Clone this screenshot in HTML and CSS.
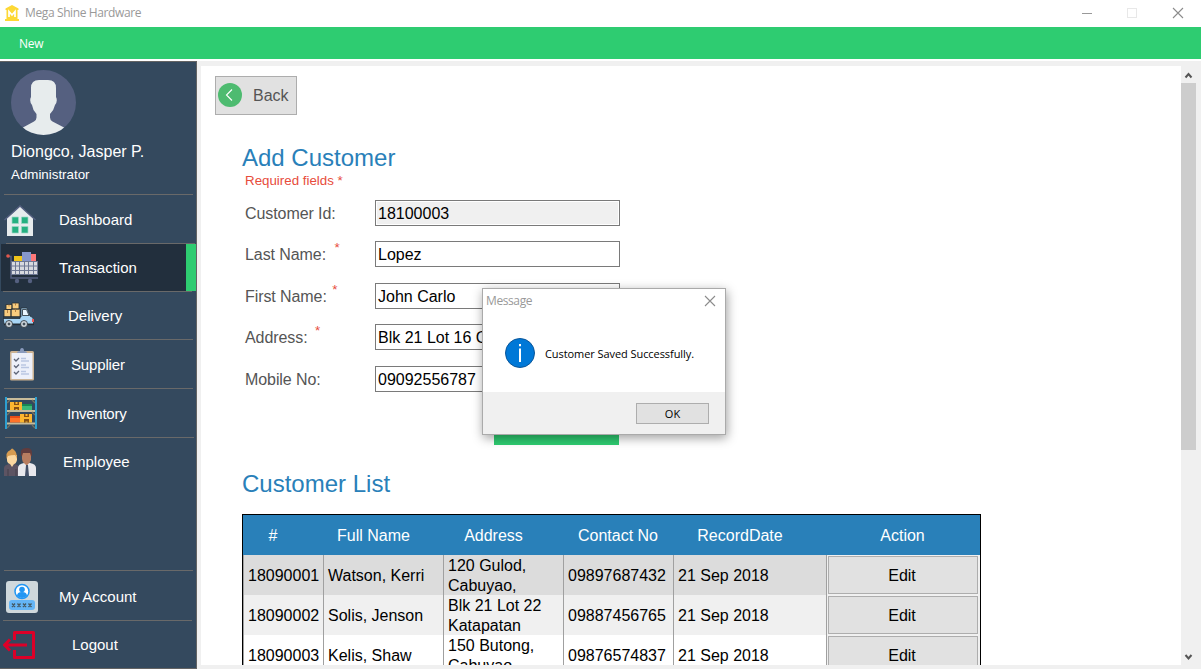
FILE: index.html
```html
<!DOCTYPE html>
<html lang="en">
<head>
<meta charset="utf-8">
<title>Mega Shine Hardware</title>
<link rel="stylesheet" href="styles.css">
</head>
<body>
<div class="window">
  <header class="titlebar">
    <svg class="app-logo" width="14" height="16" viewBox="0 0 14 16"><path fill="#fdd835" d="M7 0 13.500 3.400V5H.5V3.400zM1.500 5h11v9h-11zM0 14h14v2H0z"/><path d="M4 12V6.500L7 10l3-3.500V12" fill="none" stroke="#fff" stroke-width="1.700"/></svg>
    <span class="app-name">Mega Shine Hardware</span>
    <svg class="controls" width="104" height="12" viewBox="0 0 104 12" fill="none"><path d="M0 6.500h10" stroke="#999"/><rect x="45.500" y="1.500" width="9" height="9" stroke="#e8e8e8"/><path d="M91 1l10 10M101 1 91 11" stroke="#8c8c8c" stroke-width="1.100"/></svg>
  </header>
  <nav class="menubar"><span class="menu-new">New</span></nav>
  <div class="body">
    <aside class="sidebar">
      <div class="profile">
        <svg class="avatar" width="66" height="66" viewBox="0 0 66 66"><defs><clipPath id="face"><circle cx="32.500" cy="32.500" r="32.500"/></clipPath></defs><circle cx="32.500" cy="32.500" r="32.500" fill="#556080"/><path clip-path="url(#face)" fill="#e7eced" d="M11 58 23 51.500q2.500-1.500 2.500-4V44q-4-4.500-4.500-9-3-4-1-8v-9q0-8 8-8h9q8 0 8 8v9q2 4-1 8-1 5-5 9v3.500q0 2.500 2.500 4L54 58v8H11z"/></svg>
        <div class="user-name">Diongco, Jasper P.</div>
        <div class="user-role">Administrator</div>
      </div>
      <div class="rule rule-a"></div>
      <div class="item h48"><div class="ico ico-house"><svg width="34" height="32" viewBox="0 0 34 32"><path d="M3 13 16 1l13 12v18H3z" fill="#e7eced"/><path d="M.5 15 16 1l15.500 14" fill="none" stroke="#556080" stroke-width="1.500"/><g fill="#26b081" stroke="#9fd9c5" stroke-width=".7"><path d="M8 12h6.500v6.500H8zM17.500 12H24v6.500h-6.500zM8 21.500h6.500V28H8zM17.500 21.500H24V28h-6.500z"/></g></svg></div><span>Dashboard</span></div>
      <div class="rule rule-b"></div>
      <div class="item active"><div class="ico ico-cart"><svg width="34" height="33" viewBox="0 0 34 33"><path fill="#efc41a" d="M8 5h8v5H8z"/><path fill="#8697cb" d="M16 1h9v9h-9z"/><path fill="#ff7979" d="M25 3h5v7h-5z"/><path d="M2 5.500h3v21.500h27" fill="none" stroke="#556080" stroke-width="1.500"/><path fill="#d7d9df" d="M5 10h27v14H5z"/><path d="M5 10.500h27M5 15h27M5 19.500h27M5 23.500h27M5.500 10v14M9.500 10v14M13.500 10v14M18.500 10v14M22.500 10v14M27.500 10v14M31.500 10v14" stroke="#6d7792" stroke-width="1"/><circle cx="2" cy="5" r="1.800" fill="#e2574c"/><circle cx="11" cy="30" r="2.200" fill="#556080"/><circle cx="24" cy="30" r="2.200" fill="#556080"/></svg></div><span>Transaction</span><i class="marker"></i></div>
      <div class="rule rule-c"></div>
      <div class="item h47"><div class="ico ico-truck"><svg width="32" height="27" viewBox="0 0 32 27" stroke="#252d35" stroke-width=".8"><g fill="#f8cc7e"><path d="M1 7.500h7V15H1zM3 2.500h6v5H3zM9 1h7v6H9zM8 7h9v8H8z"/></g><path d="M6 2.500v2M12.500 1v2.500M4.500 8v3M12.500 7v3" stroke="#a36f36"/><path fill="#a8d5f5" d="M0 15h18V6h6l3 8q3.500 1 3.500 4v4H1z"/><path fill="#e9f6ff" d="M19.500 7.500h4l2.500 6h-6.500z"/><path d="M0 15h17v1.500H0z" fill="#334a5d"/><path d="M1 22.500h30" stroke-width="1.300"/><path fill="#ef5350" stroke="none" d="M29 17h2v3h-2z"/><circle cx="6" cy="22" r="3.500" fill="#cfd6dc"/><circle cx="21" cy="22" r="3.500" fill="#cfd6dc"/><circle cx="6" cy="22" r="1" fill="#66788a"/><circle cx="21" cy="22" r="1" fill="#66788a"/></svg></div><span class="t-delivery">Delivery</span></div>
      <div class="rule rule-a"></div>
      <div class="item h48"><div class="ico ico-clip"><svg width="24" height="33" viewBox="0 0 24 33"><rect y="3" width="24" height="29.500" rx="1.500" fill="#cbb292"/><path fill="#edf0fa" d="M1.500 5h21v26h-21z"/><path fill="#8a9bbd" d="M7 5q0-2 3-2 0-3 2-3t2 3q3 0 3 2z"/><path d="m4 11 2 2 3-3M4 17.500l2 2 3-3M4 24l2 2 3-3" fill="none" stroke="#5d6578" stroke-width="1.300"/><path d="M11 10.500h5M11 13h8M11 17h5M11 19.500h8M11 23.500h5M11 26h8" stroke="#bac6e2" stroke-width="1.300"/></svg></div><span class="t-supplier">Supplier</span></div>
      <div class="rule rule-a"></div>
      <div class="item h48"><div class="ico ico-shelf"><svg width="32" height="32" viewBox="0 0 32 32"><path d="M2 2h28M2 14h28M2 26.500h28" stroke="#c7bb9a" stroke-width="2"/><path d="m2 6 3-3M30 6l-3-3M2 18l3-3M30 18l-3-3M2 31l3-3M30 31l-3-3" stroke="#77715f" stroke-width="1.300"/><path fill="#fdb62f" d="M5 5h12v8H5zM15 17h12v8.500H15z"/><path fill="#3cb878" d="M17 7h10v6H17z"/><path fill="#178753" d="M17 7h10v2H17z"/><path fill="#ff7329" d="M5 19h10v6.500H5z"/><path fill="#e64c18" d="M5 19h10v2H5z"/><path d="M9 5h1.500v2h2V5H14v3H9zM9 13v-3h5v3h-1.500v-1h-2v1zM19 17h1.500v2h2v-2H24v3h-5zM19 25.500V22h5v3.500h-1.500v-1h-2v1z" fill="#865015"/><path fill="#2d9fd0" d="M0 0h2v32H0zM30 0h2v32h-2z"/></svg></div><span class="t-inventory">Inventory</span></div>
      <div class="rule rule-d"></div>
      <div class="item h48"><div class="ico ico-people"><svg width="32" height="28" viewBox="0 0 32 28"><path fill="#5d5463" d="M0 28v-8q0-3 5-4h6q4 1 4 4v8z"/><path fill="#e8e8ed" d="M14 28v-8q0-4 6-5h6q6 1 6 5v8z"/><path fill="#fbd7a0" d="M3 7h10v5q-1 4-3 4l-2 3-2-3q-3-1-3-4z"/><path fill="#d69b50" d="M2.500 11V6q1-3 4-4Q8-1 10 2q3 2 3 9-1-3-2-4-4 0-7 1z"/><path fill="#b77d60" d="M18 5h9v7q-1 3-3 4l-1 2-2-2q-3-2-3-5z"/><path fill="#613c3d" d="M17 8V3q1-3 6-3t5 5v3h-1l-1-3h-7l-1 3z"/><path fill="#445068" d="M22 17h2l1 11h-4z"/><path d="M4 21v7M12 21v7" stroke="#453f4b"/></svg></div><span class="t-employee">Employee</span></div>
      <div class="spring"></div>
      <div class="rule rule-a"></div>
      <div class="item h49"><div class="ico ico-account"><svg width="32" height="32" viewBox="0 0 32 32"><rect width="32" height="32" rx="3" fill="#cfd8dc"/><circle cx="16" cy="10.500" r="7" fill="#fff" stroke="#2196f3" stroke-width="1.500"/><circle cx="16" cy="8.500" r="2.800" fill="#2196f3"/><path fill="#2196f3" d="M11 15q0-4 5-4t5 4q-5 4-10 0z"/><rect x="3" y="19" width="26" height="10" rx="3" fill="#64b5f6"/><path d="m6 22.500 3 3.500m0-3.500L6 26m5.500-3.500 3 3.500m0-3.500-3 3.500m5.500-3.500 3 3.500m0-3.500-3 3.500m5.500-3.500 3 3.500m0-3.500-3 3.500" stroke="#455a64" stroke-width="1.300"/></svg></div><span class="t-account">My Account</span></div>
      <div class="rule rule-c"></div>
      <div class="item h47"><div class="ico ico-logout"><svg width="33" height="28" viewBox="0 0 33 28" fill="none" stroke="#dc0028" stroke-width="3" stroke-linejoin="round"><path d="M11.500 9V1.500h19v25h-19V19"/><path d="M24 14H2M7 8.500 1.500 14 7 19.500"/></svg></div><span class="t-logout">Logout</span></div>
    </aside>
    <main class="panel">
      <button class="back"><svg width="24" height="24" viewBox="0 0 24 24"><circle cx="12" cy="12" r="12" fill="#4ebb70"/><path d="m14 6.500-5.500 5.500 5.500 5.500" fill="none" stroke="#fff" stroke-width="1.100"/></svg><span>Back</span></button>
      <h1 class="heading">Add Customer</h1>
      <div class="required">Required fields *</div>
      <form class="form">
        <div class="field"><label>Customer Id:</label><div class="input readonly">18100003</div></div>
        <div class="field"><label>Last Name: <sup class="s-last">*</sup></label><div class="input">Lopez</div></div>
        <div class="field late"><label>First Name: <sup class="s-first">*</sup></label><div class="input">John Carlo</div></div>
        <div class="field"><label>Address: <sup class="s-addr">*</sup></label><div class="input">Blk 21 Lot 16 C</div></div>
        <div class="field late"><label>Mobile No:</label><div class="input">09092556787</div></div>
        <div class="save"></div>
      </form>
      <h2 class="heading list-heading">Customer List</h2>
      <div class="grid">
        <div class="row head"><div>#</div><div>Full Name</div><div>Address</div><div class="mid">Contact No</div><div>RecordDate</div><div class="mid">Action</div></div>
        <div class="row selected"><div>18090001</div><div>Watson, Kerri</div><div>120 Gulod,<br>Cabuyao,</div><div>09897687432</div><div>21 Sep 2018</div><div class="act"><button>Edit</button></div></div>
        <div class="row alt"><div>18090002</div><div>Solis, Jenson</div><div>Blk 21 Lot 22<br>Katapatan</div><div>09887456765</div><div>21 Sep 2018</div><div class="act"><button>Edit</button></div></div>
        <div class="row"><div>18090003</div><div>Kelis, Shaw</div><div>150 Butong,<br>Cabuyao</div><div>09876574837</div><div>21 Sep 2018</div><div class="act"><button>Edit</button></div></div>
      </div>
    </main>
    <div class="scrollbar">
      <svg width="15" height="17" viewBox="0 0 15 17"><path d="m4.500 11.500 3-3.500 3 3.500" fill="none" stroke="#555" stroke-width="2"/></svg>
      <div class="thumb"></div>
      <svg class="down" width="15" height="17" viewBox="0 0 15 17"><path d="m4.500 7 3 3.500 3-3.500" fill="none" stroke="#555" stroke-width="2"/></svg>
    </div>
  </div>
</div>
<div class="dialog">
  <div class="dialog-title"><span>Message</span><svg width="12" height="12" viewBox="0 0 12 12"><path d="m1 1 10 10M11 1 1 11" stroke="#8c8c8c" stroke-width="1.100"/></svg></div>
  <div class="dialog-body"><svg width="30" height="30" viewBox="0 0 30 30"><circle cx="15" cy="15" r="14.500" fill="#0078d7" stroke="#0b5699"/><path d="M14 6h2v2.200h-2zM14 10.500h2V24h-2z" fill="#fff"/></svg><span>Customer Saved Successfully.</span></div>
  <div class="dialog-foot"><button class="ok">OK</button></div>
</div>
</body>
</html>
```
FILE: styles.css
```css
* { box-sizing: border-box; }
body { margin: 0; overflow: hidden; background: #f0f0f0; font: 16px/18px "Liberation Sans", Arial, sans-serif; color: #000; }
button { font: inherit; padding: 0; border-radius: 0; background: #e1e1e1; border: 1px solid #adadad; color: #000; }
svg { display: block; flex: none; }
.window { width: 1201px; height: 669px; display: flex; flex-direction: column; }
.titlebar { height: 27px; flex: none; background: #fff; display: flex; align-items: center; padding: 0 15px 1px 5px; }
.app-name { margin-left: 6px; font: 12px/16px "Open Sans", sans-serif; letter-spacing: -.38px; color: #999; }
.controls { margin-left: auto; }
.menubar { height: 34px; flex: none; background: #2ecc71; border-bottom: 2px solid #fff; display: flex; align-items: center; padding: 2px 0 0 19px; color: #fff; font: 12px/16px "Open Sans", sans-serif; letter-spacing: -.3px; }
.body { flex: 1; display: flex; min-height: 0; }

.sidebar { width: 197px; flex: none; background: #34495e; border: 1px solid #646464; border-left: 0; display: flex; flex-direction: column; color: #fff; }
.profile { height: 132px; flex: none; padding: 8px 0 0 11px; }
.user-name { margin-top: 7px; }
.user-role { margin-top: 5px; font-size: 13.33px; }
.rule { height: 1px; flex: none; background: #696969; margin-left: 4px; width: 189px; }
.rule-b { margin-left: 6px; }
.rule-c { margin-left: 3px; }
.rule-d { margin-left: 5px; }
.item { display: flex; align-items: center; flex: none; font-size: 15px; }
.h47 { height: 47px; }
.h48 { height: 48px; }
.h49 { height: 49px; }
.ico { width: 59px; flex: none; }
.item span { padding-top: 1px; }
.ico-house { padding: 3px 0 0 4px; }
.ico-cart { padding-left: 5px; width: 58px; }
.ico-truck { padding-left: 3px; }
.ico-clip { padding-left: 10px; }
.ico-shelf { padding-left: 5px; }
.ico-people { padding-left: 4px; }
.ico-account { padding: 3px 0 0 6px; }
.ico-logout { padding-left: 3px; }
.active { height: 47px; margin-left: 1px; background: #222f3d; }
.marker { width: 10px; height: 47px; margin-left: auto; background: #2ecc71; }
.t-delivery { margin-left: 9px; }
.t-supplier { margin-left: 12px; letter-spacing: -.15px; }
.t-inventory { margin-left: 8px; letter-spacing: -.25px; }
.item .t-employee { margin-left: 4px; padding-top: 0; margin-top: -1px; }
.item .t-account { padding-top: 3px; }
.t-logout { margin-left: 13px; }
.spring { flex: 1; }

.panel { width: 980px; height: 599px; margin: 5px 0 0 4px; padding: 10px 0 0 14px; background: #fff; overflow: hidden; flex: none; }
.back { width: 82px; height: 39px; display: flex; align-items: center; padding-left: 2px; color: #555; }
.back svg { margin-top: -1px; }
.back span { margin-left: 11px; }
.heading { margin: 29px 0 0 27px; font-size: 24px; line-height: 28px; font-weight: 400; color: #2980b9; }
.required { margin: 0 0 0 30px; height: 18px; font-size: 13.33px; color: #e74c3c; }
.form { margin: 10px 0 0 30px; width: 375px; }
.field { display: flex; margin-bottom: 15px; height: 26px; }
.late { margin-top: 16px; }
.field label { width: 130px; color: #555; line-height: 28px; letter-spacing: -.08px; }
.field sup { font-size: 13.33px; line-height: 0; color: #e74c3c; vertical-align: 8px; }
.s-last { margin-left: 4px; }
.s-first { margin-left: 1px; }
.s-addr { margin-left: 3px; }
.input { width: 245px; border: 1px solid #7a7a7a; background: #fff; padding-left: 2px; line-height: 25px; white-space: nowrap; }
.readonly { background: #f0f0f0; box-shadow: inset 0 0 0 1px #fff; }
.save { width: 125px; height: 32px; margin: 21px 0 0 249px; background: #2ecc71; }
.list-heading { margin-top: 25px; }

.grid { margin: 16px 0 0 27px; width: 739px; border: 1px solid #000; }
.row { display: grid; grid-template-columns: 81px 120px 120px 110px 153px 153px; height: 40px; background: #fff; }
.row > div { display: flex; align-items: center; padding: 1px 0 0 4px; border-right: 1px solid #a0a0a0; line-height: 20px; white-space: nowrap; overflow: hidden; }
.row > div:first-child { border-left: 1px solid #a0a0a0; }
.row > div:last-child { border-right: 0; }
.head { background: #2980b9; color: #fff; }
.row.head > div, .row.head > div:first-child { justify-content: center; border: 0; padding: 1px 21px 0 0; }
.row.head > .mid { padding-right: 2px; }
.row.selected { background: #dcdcdc; }
.row.alt { background: #f0f0f0; }
.row > .act { padding: 1px 2px 1px 1px; background: #f0f0f0; }
.act button { width: 100%; height: 38px; padding: 1px 2px 0 0; }

.scrollbar { width: 15px; height: 599px; margin-top: 5px; display: flex; flex-direction: column; flex: none; }
.thumb { height: 367px; background: #cdcdcd; }
.down { margin-top: auto; }

.dialog { position: absolute; left: 482px; top: 288px; width: 244px; height: 147px; border: 1px solid #aaa; background: #fff; box-shadow: 1px 3px 10px rgba(0,0,0,.38); display: flex; flex-direction: column; font: 11px/16px "Open Sans", sans-serif; }
.dialog-title { height: 24px; display: flex; align-items: center; justify-content: space-between; padding: 0 9px 0 3px; color: #999; font-size: 12px; letter-spacing: -.4px; }
.dialog-body { flex: 1; display: flex; align-items: center; padding: 0 0 0 22px; }
.dialog-body span { margin: 2px 0 0 10px; white-space: nowrap; letter-spacing: -.07px; }
.dialog-foot { height: 42px; background: #f0f0f0; padding: 11px 16px 0 0; display: flex; justify-content: flex-end; align-items: flex-start; }
.ok { width: 73px; height: 21px; }
```
